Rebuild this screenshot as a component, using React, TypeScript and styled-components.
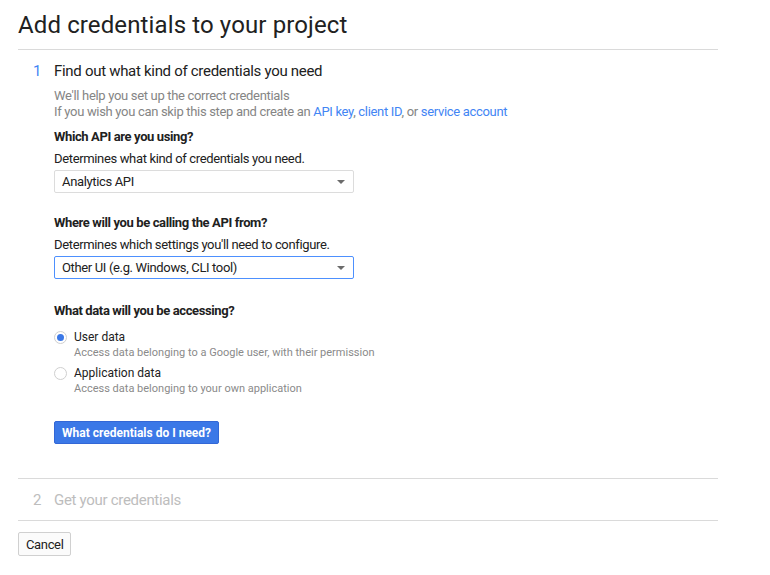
import React from "react";
import styled, { createGlobalStyle } from "styled-components";

const GlobalStyle = createGlobalStyle`
  html, body { margin: 0; padding: 0; background: #ffffff; }
  body {
    font-family: Roboto, "Noto Sans", Arial, sans-serif;
    color: #212121;
    -webkit-font-smoothing: antialiased;
  }
`;

const Page = styled.div`
  width: 700px;
  padding: 0 18px;
`;

const Header = styled.header`
  padding: 9px 0 8px;
  border-bottom: 1px solid #dadada;
`;

const Title = styled.h1`
  margin: 0;
  font-size: 24px;
  line-height: 32px;
  font-weight: 400;
  letter-spacing: 0.12px;
  color: #212121;
`;

const Step = styled.section<{ $padBottom: number }>`
  display: grid;
  grid-template-columns: 36px 1fr;
  padding: 11px 0 ${(p) => p.$padBottom}px;
  border-bottom: 1px solid #dadada;
`;

const StepNum = styled.div<{ $active?: boolean }>`
  padding-left: 15px;
  font-size: 15px;
  line-height: 20px;
  color: ${(p) => (p.$active ? "#4285f4" : "#bdbdbd")};
`;

const StepBody = styled.div`
  display: flex;
  flex-direction: column;
  align-items: flex-start;
`;

const StepTitle = styled.h2<{ $active?: boolean }>`
  margin: 0;
  font-size: 15px;
  line-height: 20px;
  font-weight: 400;
  letter-spacing: -0.3px;
  color: ${(p) => (p.$active ? "#212121" : "#bdbdbd")};
`;

const Intro = styled.p`
  margin: 7px 0 0;
  font-size: 13px;
  line-height: 16px;
  letter-spacing: -0.32px;
  color: #858585;
`;

const Link = styled.a`
  color: #4285f4;
  text-decoration: none;
`;

const Field = styled.div<{ $gap: number }>`
  display: flex;
  flex-direction: column;
  align-items: flex-start;
  margin-top: ${(p) => p.$gap}px;
`;

const Label = styled.div`
  font-size: 13px;
  line-height: 16px;
  font-weight: 700;
  letter-spacing: -0.38px;
  color: #212121;
`;

const Hint = styled.div`
  margin-top: 6px;
  font-size: 13px;
  line-height: 16px;
  letter-spacing: -0.35px;
  color: #212121;
`;

const Select = styled.div<{ $focused?: boolean }>`
  position: relative;
  box-sizing: border-box;
  margin-top: 3px;
  width: 300px;
  height: 23px;
  padding: 0 24px 0 7px;
  display: flex;
  align-items: center;
  border: 1px solid ${(p) => (p.$focused ? "#4d90fe" : "#dcdcdc")};
  border-radius: 2px;
  font-size: 13px;
  letter-spacing: -0.35px;
  color: #212121;
  background: #fff;
`;

const Caret = styled.span`
  position: absolute;
  right: 8px;
  top: 9px;
  width: 0;
  height: 0;
  border-left: 4px solid transparent;
  border-right: 4px solid transparent;
  border-top: 4px solid #6b6b6b;
`;

const RadioList = styled.div`
  display: flex;
  flex-direction: column;
  margin-top: 10px;
  gap: 5px;
`;

const Option = styled.label`
  display: flex;
  align-items: flex-start;
  gap: 7px;
`;

const RadioDot = styled.span<{ $checked?: boolean }>`
  box-sizing: border-box;
  flex: none;
  margin-top: 2px;
  width: 13px;
  height: 13px;
  border-radius: 50%;
  border: 1px solid #cfcfcf;
  background: #fff;
  display: flex;
  align-items: center;
  justify-content: center;
  &::after {
    content: "";
    display: ${(p) => (p.$checked ? "block" : "none")};
    width: 7px;
    height: 7px;
    border-radius: 50%;
    background: #3b78e7;
  }
`;

const OptionText = styled.div`
  display: flex;
  flex-direction: column;
`;

const OptionName = styled.span`
  font-size: 12px;
  line-height: 16px;
  color: #212121;
`;

const OptionDesc = styled.span`
  font-size: 11px;
  line-height: 15px;
  color: #8a8a8a;
`;

const PrimaryButton = styled.button`
  margin-top: 25px;
  box-sizing: border-box;
  height: 23px;
  padding: 0 7px;
  border: 1px solid #3367d6;
  border-radius: 2px;
  background: #3b78e7;
  color: #fff;
  font-family: Roboto, Arial, sans-serif;
  font-size: 12px;
  font-weight: 700;
  cursor: pointer;
`;

const Footer = styled.div`
  padding-top: 11px;
`;

const SecondaryButton = styled.button`
  box-sizing: border-box;
  height: 24px;
  padding: 0 7px;
  border: 1px solid #d0d0d0;
  border-radius: 2px;
  background: #fbfbfb;
  color: #212121;
  font-family: Roboto, Arial, sans-serif;
  font-size: 13px;
  letter-spacing: -0.35px;
  cursor: pointer;
`;

export default function App() {
  return (
    <>
      <GlobalStyle />
      <Page>
        <Header>
          <Title>Add credentials to your project</Title>
        </Header>

        <Step $padBottom={34}>
          <StepNum $active>1</StepNum>
          <StepBody>
            <StepTitle $active>Find out what kind of credentials you need</StepTitle>
            <Intro>
              We'll help you set up the correct credentials
              <br />
              If you wish you can skip this step and create an <Link href="#">API key</Link>,{" "}
              <Link href="#">client ID</Link>, or <Link href="#">service account</Link>
            </Intro>

            <Field $gap={9}>
              <Label>Which API are you using?</Label>
              <Hint>Determines what kind of credentials you need.</Hint>
              <Select>
                Analytics API
                <Caret />
              </Select>
            </Field>

            <Field $gap={22}>
              <Label>Where will you be calling the API from?</Label>
              <Hint>Determines which settings you'll need to configure.</Hint>
              <Select $focused>
                Other UI (e.g. Windows, CLI tool)
                <Caret />
              </Select>
            </Field>

            <Field $gap={24}>
              <Label>What data will you be accessing?</Label>
              <RadioList>
                <Option>
                  <RadioDot $checked />
                  <OptionText>
                    <OptionName>User data</OptionName>
                    <OptionDesc>Access data belonging to a Google user, with their permission</OptionDesc>
                  </OptionText>
                </Option>
                <Option>
                  <RadioDot />
                  <OptionText>
                    <OptionName>Application data</OptionName>
                    <OptionDesc>Access data belonging to your own application</OptionDesc>
                  </OptionText>
                </Option>
              </RadioList>
            </Field>

            <PrimaryButton>What credentials do I need?</PrimaryButton>
          </StepBody>
        </Step>

        <Step $padBottom={10}>
          <StepNum>2</StepNum>
          <StepBody>
            <StepTitle>Get your credentials</StepTitle>
          </StepBody>
        </Step>

        <Footer>
          <SecondaryButton>Cancel</SecondaryButton>
        </Footer>
      </Page>
    </>
  );
}
